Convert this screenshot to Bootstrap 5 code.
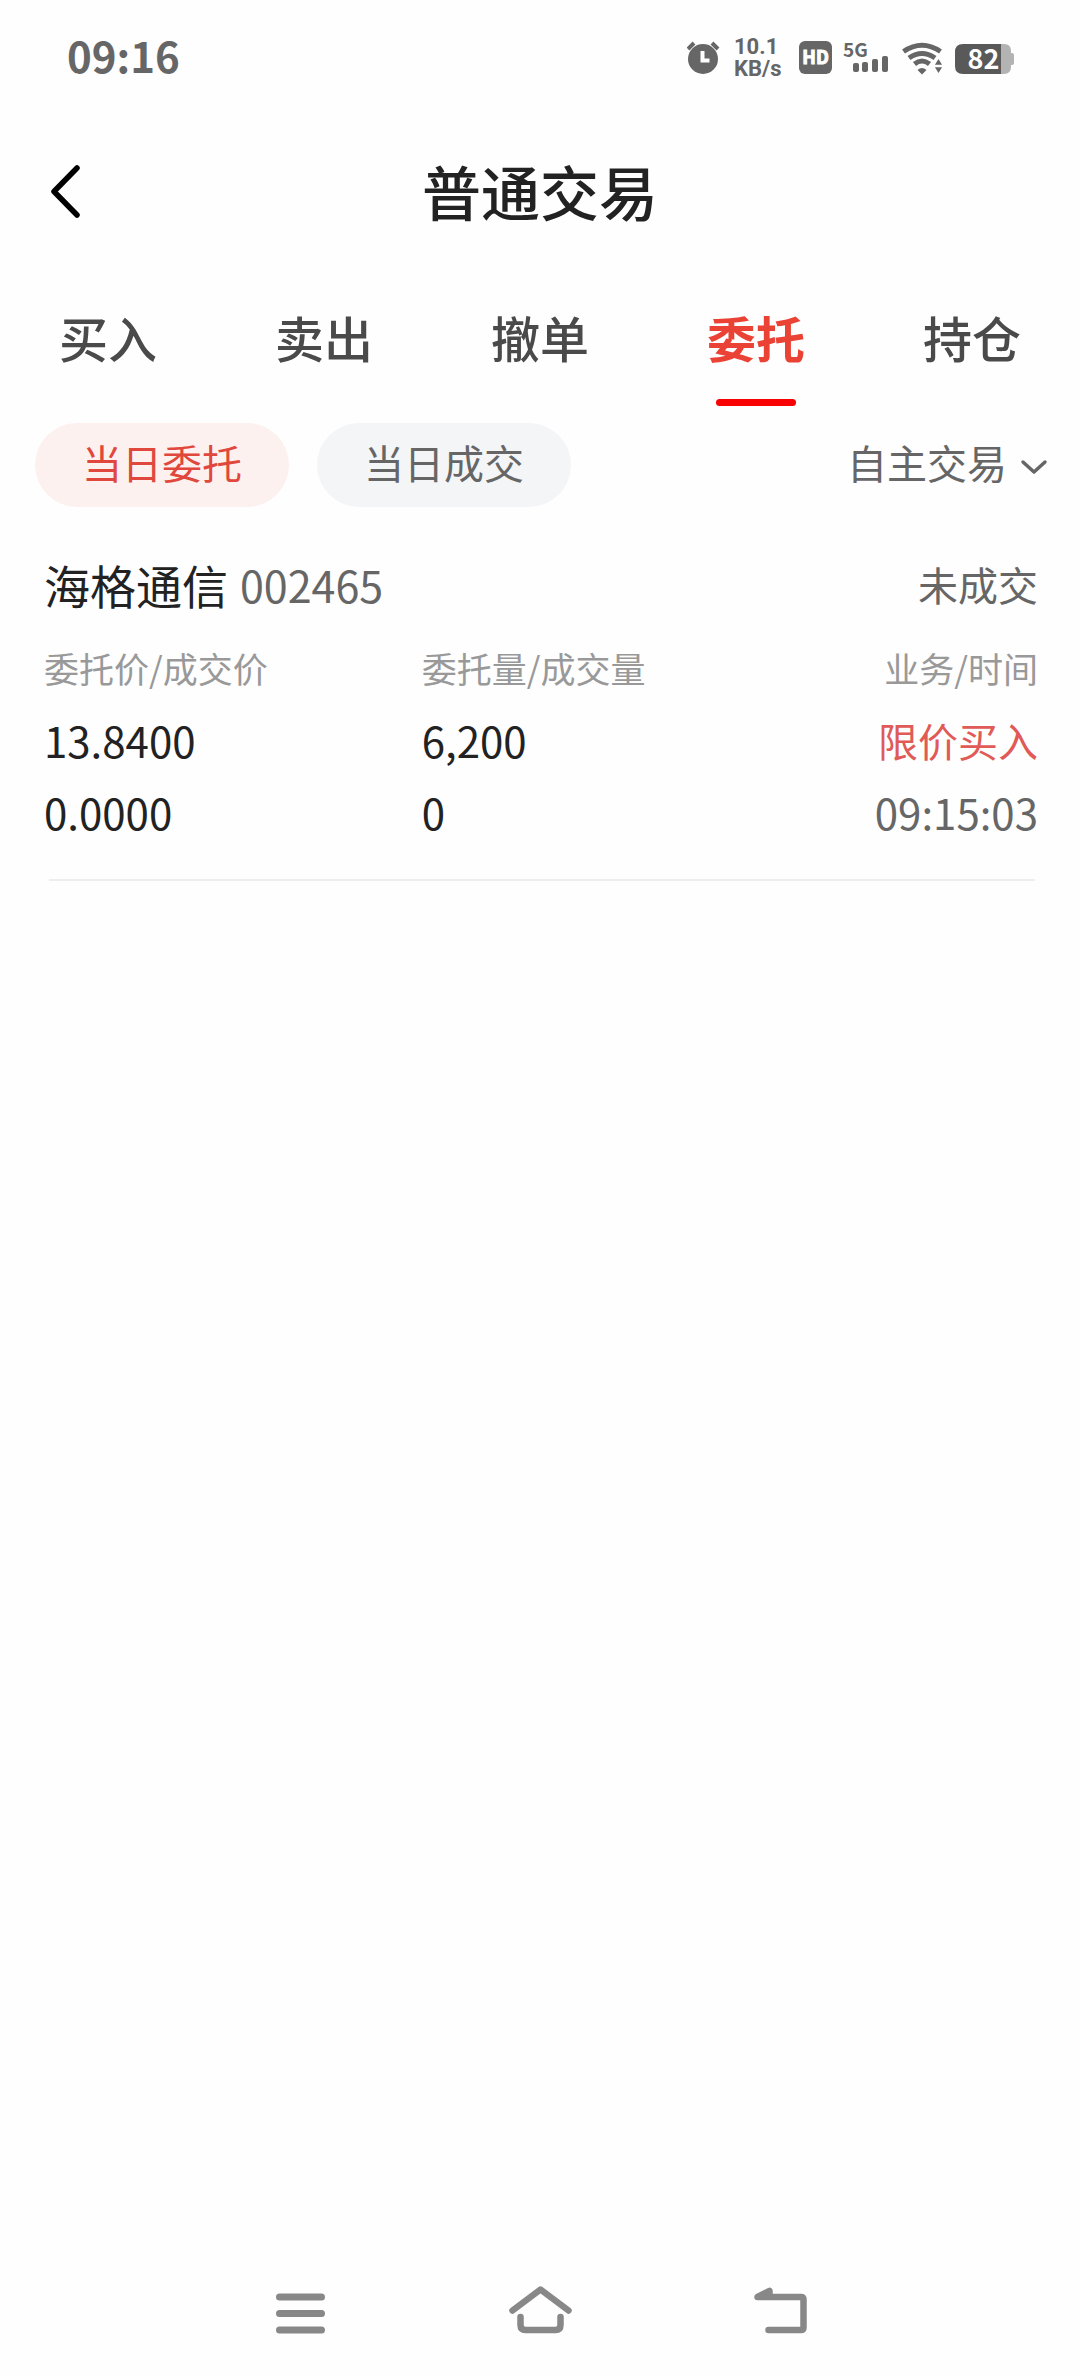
<!DOCTYPE html>
<html lang="zh-CN">
<head>
<meta charset="utf-8">
<meta name="viewport" content="width=device-width, initial-scale=1">
<title>普通交易</title>
<link href="https://cdn.jsdelivr.net/npm/bootstrap@5.3.0/dist/css/bootstrap.min.css" rel="stylesheet">
<style>
  body { font-family: "Noto Sans CJK SC", sans-serif; color: #222; background: #fefefe; }
  svg { display: block; flex: none; }

  /* system status bar */
  .sysbar { height: 116px; padding: 0 65px 0 67px; color: #666; }
  .sys-clock { font-size: 42px; line-height: 48px; font-weight: 700; padding-bottom: 6px; }
  .sys-icons { height: 48px; gap: 11px; }
  .net-speed { font-family: Roboto, sans-serif; font-size: 22px; line-height: 22px; font-weight: 700; width: 54px; }
  .sys-icons text { font-family: "Noto Sans CJK SC", sans-serif; font-weight: 700; }

  /* page header */
  .page-head { height: 150px; }
  .page-head h1 { font-size: 59px; line-height: 80px; font-weight: 500; }
  .back-btn { left: 36px; padding: 12px; }

  /* section tabs */
  .trade-tabs .nav-link { height: 141px; padding: 0; font-size: 49px; line-height: 142px; font-weight: 500; color: #4a4a4a; }
  .trade-tabs .nav-link.active { color: #eb4236; font-weight: 700; }
  .trade-tabs .nav-link.active::after { content: ""; display: block; width: 80px; height: 7px; margin: -9px auto 0; border-radius: 4px; background: #f90204; }

  /* filter row */
  .filters { padding: 16px 32px 0 35px; gap: 28px; color: #666; }
  .chip { width: 254px; height: 84px; padding: 0 0 6px; border: 0; font-size: 40px; line-height: 60px; color: #666; background: #f4f5f7; }
  .chip.active { color: #e0483d; background: #fdf1ef; }
  .account-pick { gap: 13px; }
  .account-pick select { appearance: none; border: 0; padding: 0 0 6px; background: transparent; color: inherit; font-size: 40px; line-height: 60px; }

  /* order entries */
  .order-item { margin: 0 42px 0 44px; padding-top: 47px; }
  .stock-name { font-size: 46px; line-height: 60px; font-weight: 400; }
  .stock-code { font-size: 43px; line-height: 60px; color: #666; }
  .order-state { font-size: 40px; line-height: 60px; color: #666; }
  .order-grid { table-layout: fixed; width: 100%; margin-top: 30px; }
  .order-grid th { font-size: 35px; line-height: 48px; font-weight: 400; color: #999; padding: 0 0 12px; }
  .order-grid td { font-size: 42px; line-height: 72px; padding: 0; }
  .order-grid .side-buy { font-size: 40px; color: #e05a57; }
  .order-grid .order-time { color: #666; }
  .order-rule { margin: 31px 3px 0 5px; height: 2px; background: #eee; }

  /* system navigation */
  .sysnav { padding: 0 180px 30px; }
  .sysnav button { width: 33.3333%; }
</style>
</head>
<body class="min-vh-100 d-flex flex-column">

<div class="sysbar d-flex align-items-center justify-content-between">
  <time class="sys-clock">09:16</time>
  <div class="sys-icons d-flex align-items-center">
    <!-- alarm -->
    <svg width="36" height="48" viewBox="0 0 36 48" fill="currentColor" role="img" aria-label="闹钟">
      <circle cx="16" cy="25" r="15"/>
      <path d="M1 15 7 9M25 9l6 6" stroke="currentColor" stroke-width="4" fill="none"/>
      <path d="M15.500 17v9.500h7" stroke="#fefefe" stroke-width="4" fill="none"/>
    </svg>
    <div class="net-speed text-nowrap">10.1<br>KB/s</div>
    <!-- HD -->
    <svg width="33" height="48" viewBox="0 0 33 48" role="img" aria-label="HD">
      <rect x="0" y="7" width="33" height="33" rx="6" fill="currentColor"/>
      <text x="16.500" y="30" font-size="18" text-anchor="middle" fill="#fefefe" stroke="#fefefe">HD</text>
    </svg>
    <!-- 5G signal -->
    <svg width="48" height="48" viewBox="0 0 48 48" fill="currentColor" role="img" aria-label="5G">
      <text x="0" y="23" font-size="19">5G</text>
      <rect x="10" y="29" width="6" height="9" rx="2"/><rect x="19" y="28" width="6" height="10" rx="2"/>
      <rect x="29" y="25" width="6" height="13" rx="2"/><rect x="39" y="22" width="6" height="16" rx="2"/>
    </svg>
    <!-- wifi -->
    <svg width="42" height="48" viewBox="0 0 42 48" fill="none" stroke="currentColor" stroke-width="5" role="img" aria-label="Wi-Fi">
      <path d="M1.500 17.500Q20 5 38.500 17.500M7 24Q20 15 33 24M12.500 30Q20 24 27.500 30"/>
      <path d="M15.500 36q4.500-4 9 0L20 40.500z" fill="currentColor" stroke="none"/>
      <path d="M36.500 23.500l5 8h-10zM36.500 40.500l5-8h-10z" fill="currentColor" stroke="#fefefe" stroke-width="1.500"/>
    </svg>
    <!-- battery -->
    <svg width="60" height="48" viewBox="0 0 60 48" role="img" aria-label="82%">
      <path d="M46 10h3q7 0 7 7v2h1q2 0 2 2v8q0 2-2 2h-1v2q0 7-7 7h-3z" fill="#b3b3b3"/>
      <path d="M46 10H8q-8 0-8 8v14q0 8 8 8h38z" fill="#595959"/>
      <text x="28.500" y="35" font-size="27" text-anchor="middle" fill="#fefefe">82</text>
    </svg>
  </div>
</div>

<header class="page-head d-flex align-items-center justify-content-center position-relative">
  <button type="button" class="btn back-btn border-0 position-absolute" aria-label="返回">
    <svg width="36" height="60" viewBox="0 0 36 60" fill="none" stroke="#000" stroke-width="5.500" stroke-linecap="round" stroke-linejoin="round"><path d="M29 7 6 30.500 29 54"/></svg>
  </button>
  <h1 class="m-0">普通交易</h1>
</header>

<main>
  <nav class="nav nav-fill nav-justified trade-tabs">
    <a class="nav-link" href="#">买入</a>
    <a class="nav-link" href="#">卖出</a>
    <a class="nav-link" href="#">撤单</a>
    <a class="nav-link active" aria-current="page" href="#">委托</a>
    <a class="nav-link" href="#">持仓</a>
  </nav>

  <div class="filters d-flex align-items-center">
    <button type="button" class="btn chip rounded-pill active" aria-pressed="true">当日委托</button>
    <button type="button" class="btn chip rounded-pill" aria-pressed="false">当日成交</button>
    <label class="account-pick d-flex align-items-center ms-auto">
      <select aria-label="交易类型"><option>自主交易</option></select>
      <svg width="28" height="28" viewBox="0 0 28 28" fill="none" stroke="currentColor" stroke-width="3.500" stroke-linecap="round" stroke-linejoin="round"><path d="M3 11l11 10 11-10"/></svg>
    </label>
  </div>

  <article class="order-item">
    <div class="d-flex align-items-center">
      <h2 class="stock-name m-0">海格通信</h2>
      <span class="stock-code ms-2 ps-1">002465</span>
      <span class="order-state ms-auto">未成交</span>
    </div>
    <table class="order-grid">
      <colgroup><col style="width:38%"><col style="width:31%"><col style="width:31%"></colgroup>
      <thead>
        <tr><th scope="col">委托价/成交价</th><th scope="col">委托量/成交量</th><th scope="col" class="text-end">业务/时间</th></tr>
      </thead>
      <tbody>
        <tr><td>13.8400</td><td>6,200</td><td class="side-buy text-end">限价买入</td></tr>
        <tr><td>0.0000</td><td>0</td><td class="order-time text-end">09:15:03</td></tr>
      </tbody>
    </table>
    <div class="order-rule"></div>
  </article>
</main>

<footer class="sysnav mt-auto d-flex">
  <button type="button" class="btn border-0 p-0 d-flex justify-content-center" aria-label="最近任务">
    <svg width="64" height="64" viewBox="0 0 64 64" fill="none" stroke="#888" stroke-width="7" stroke-linecap="round"><path d="M11.500 15h42M11.500 31.500h42M11.500 48h42"/></svg>
  </button>
  <button type="button" class="btn border-0 p-0 d-flex justify-content-center" aria-label="主页">
    <svg width="64" height="64" viewBox="0 0 64 64" fill="none" stroke="#888" stroke-width="6.500" stroke-linecap="round" stroke-linejoin="round"><path d="M4.500 28.500 32.500 7.500l28 21M12.500 35v8q0 5 5 5h30q5 0 5-5V35"/></svg>
  </button>
  <button type="button" class="btn border-0 p-0 d-flex justify-content-center" aria-label="返回上一级">
    <svg width="64" height="64" viewBox="0 0 64 64" fill="none" stroke="#888" stroke-width="6.500" stroke-linecap="round" stroke-linejoin="round"><path d="M20.500 48H53q2.500 0 2.500-2.500v-28Q55.500 15 53 15H9.500L21.500 9v4"/></svg>
  </button>
</footer>

<script src="https://cdn.jsdelivr.net/npm/bootstrap@5.3.0/dist/js/bootstrap.bundle.min.js"></script>
</body>
</html>
